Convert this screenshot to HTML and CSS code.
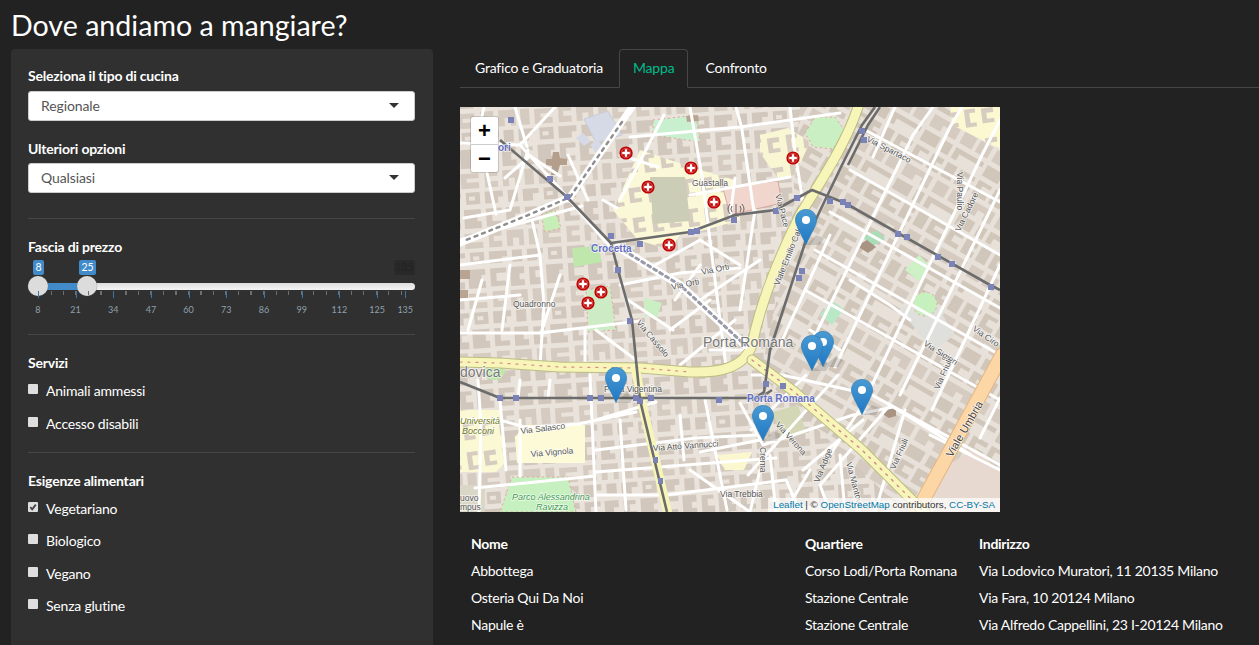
FILE: index.html
```html
<!DOCTYPE html>
<html lang="it">
<head>
    <meta charset="UTF-8">
    <meta name="viewport" content="width=device-width, initial-scale=1.0">
    <title>Dove andiamo a mangiare?</title>
    <link rel="stylesheet" href="styles.css">
</head>
<body>
    <h2 class="page-title">Dove andiamo a mangiare?</h2>

    <div class="layout">
        <aside class="well">
            <label class="field-label">Seleziona il tipo di cucina</label>
            <div class="select-box">Regionale</div>

            <label class="field-label second">Ulteriori opzioni</label>
            <div class="select-box">Qualsiasi</div>

            <hr>

            <label class="field-label">Fascia di prezzo</label>
            <div class="slider">
                <span class="bubble bubble-from">8</span>
                <span class="bubble bubble-to">25</span>
                <span class="bubble-max">135</span>
                <div class="track"><div class="track-bar"></div></div>
                <span class="handle handle-from"></span>
                <span class="handle handle-to"></span>
                <div class="minor-ticks"></div>
                <div class="scale">
                    <span class="tick">8</span>
                    <span class="tick">21</span>
                    <span class="tick">34</span>
                    <span class="tick">47</span>
                    <span class="tick">60</span>
                    <span class="tick">73</span>
                    <span class="tick">86</span>
                    <span class="tick">99</span>
                    <span class="tick">112</span>
                    <span class="tick">125</span>
                    <span class="tick tick-last">135</span>
                </div>
            </div>

            <hr class="after-slider">

            <label class="field-label">Servizi</label>
            <div class="check first"><span class="box"></span>Animali ammessi</div>
            <div class="check"><span class="box"></span>Accesso disabili</div>

            <hr class="after-checks">

            <label class="field-label">Esigenze alimentari</label>
            <div class="check first">
                <span class="box">
                    <svg viewBox="0 0 10 10" width="10" height="10"><path d="M2.3 5.2 4.2 7.4 7.8 2.6" fill="none" stroke="#444" stroke-width="1.8"/></svg>
                </span>Vegetariano
            </div>
            <div class="check"><span class="box"></span>Biologico</div>
            <div class="check"><span class="box"></span>Vegano</div>
            <div class="check"><span class="box"></span>Senza glutine</div>
        </aside>

        <main class="content">
            <ul class="tabs">
                <li class="tab">Grafico e Graduatoria</li>
                <li class="tab active">Mappa</li>
                <li class="tab">Confronto</li>
            </ul>

            <div class="map">
                <svg class="map-canvas" viewBox="460 107 540 405" width="540" height="405">
                    <defs>
                        <pattern id="blocksWest" width="78" height="60" patternUnits="userSpaceOnUse" patternTransform="rotate(-4)">
                            <rect width="78" height="60" fill="#e9e3db"/>
                            <path d="M2 2h16v5H8v8h9v5H2zM22 2h14v7h-5v6h5v6H22zM41 3h12v4h-6v7h7v7H41zM58 2h17v6h-4v6h4v7H58z" fill="#d2c7bc"/>
                            <path d="M3 25h13v5H8v5h8v6H3zM21 25h17v16H33v-8h-6v8h-6zM43 25h9v16h-9zM57 26h18v5H63v4h12v6H57z" fill="#d5cbc0"/>
                            <path d="M2 45h18v6h-5v6H2zM25 45h10v12H25zM40 45h16v5h-6v7H40zM61 45h14v12H61z" fill="#d2c7bc"/>
                            <path d="M64 49h6v4h-6z" fill="#e9e3db"/>
                        </pattern>
                        <pattern id="blocksEast" width="72" height="56" patternUnits="userSpaceOnUse" patternTransform="rotate(30)">
                            <rect width="72" height="56" fill="#e7e1da"/>
                            <path d="M2 2h15v4H8v7h9v5H2zM21 2h13v6h-6v4h6v6H21zM38 2h11v16H38zM53 2h17v5H59v5h11v6H53z" fill="#d1c6ba"/>
                            <path d="M3 23h30v13H24v-7h-8v7H3zM38 23h14v13H38zM56 23h14v13H56z" fill="#d5cbc0"/>
                            <path d="M2 41h18v12H2zM25 41h9v12H25zM38 41h32v5H44v7h-6z" fill="#d1c6ba"/>
                        </pattern>
                        <pattern id="blocksCampus" width="36" height="30" patternUnits="userSpaceOnUse" patternTransform="rotate(-8)">
                            <path d="M3 3h11v4H8v10h6v4H3zM20 4h12v5h-7v6h7v4H20z" fill="#d6ccc0"/>
                        </pattern>
                        <linearGradient id="pinFill" x1="0" y1="0" x2="0" y2="1">
                            <stop offset="0" stop-color="#4a9ad2"/>
                            <stop offset="1" stop-color="#1f78c4"/>
                        </linearGradient>
                        <symbol id="pin" viewBox="0 0 25 41">
                            <path d="M12.5.5C5.6.5.5 5.8.5 12.6.5 19 6.5 27 12.5 40.5 18.5 27 24.5 19 24.5 12.6 24.5 5.8 19.4.5 12.5.5z" fill="url(#pinFill)" stroke="#2e7fb8" stroke-width=".8"/>
                            <circle cx="12.5" cy="12.5" r="4.6" fill="#fff"/>
                        </symbol>
                        <symbol id="dot" viewBox="0 0 14 14">
                            <circle cx="7" cy="7" r="6.6" fill="#c00000"/>
                            <circle cx="7" cy="7" r="4.7" fill="none" stroke="#e9a0a0" stroke-width=".5"/>
                            <path d="M7 3.2v7.6M3.2 7h7.6" stroke="#fff" stroke-width="2.4"/>
                        </symbol>
                    </defs>

                    <g class="map-base">
                        <!-- ground -->
                        <rect x="460" y="107" width="540" height="405" fill="url(#blocksWest)"/>
                        <path d="M800 107H1000V512H905L760 375 790 240z" fill="url(#blocksEast)"/>

                        <!-- areas -->
                        <path d="M584 119l24-8 14 24-26 8z" fill="#d6d9e6" stroke="#c9cbd8"/>
                        <path d="M576 138l7-5 8 8-7 5zM590 145l8-5 6 8-8 5zM600 118l8-3 4 7-8 3z" fill="#d6d9e6"/>
                        <path d="M553 152l6 0 1 6 7 1 0 6-7 0-3 10-6 0 1-9-6-1 0-6 6 0z" fill="#b39f8b"/>
                        <path d="M640 150l60 20 35 10 5 40-35 10-25 5-10 15-32-10-25-30 18-40z" fill="#fbf8d8"/>
                        <path d="M640 150l60 20 35 10 5 40-35 10-25 5-10 15-32-10-25-30 18-40z" fill="url(#blocksCampus)"/>
                        <path d="M650 177h35l5 44-37 3z" fill="#cccdb6"/>
                        <path d="M653 120l43-5 4 27-34-5-13-2z" fill="#c8f0cf" stroke="#eb9f9f" stroke-dasharray="2 3"/>
                        <path d="M723 188l55-7 4 22-52 12z" fill="#f0d6cd" stroke="#d8a8a0"/>
                        <path d="M760 135l28-7 22 14-15 33-17 3-18-25z" fill="#f9f6d3"/>
                        <path d="M760 135l28-7 22 14-15 33-17 3-18-25z" fill="url(#blocksCampus)"/>
                        <path d="M815 117l20 0 10 14-12 18-20-2-8-14z" fill="#c9efc2" stroke="#eb9f9f" stroke-dasharray="2 3"/>
                        <path d="M950 107h50v42l-48-24z" fill="#fbf8d2"/>
                        <path d="M950 107h50v42l-48-24z" fill="url(#blocksCampus)"/>
                        <path d="M572 248l26-2 4 16-28 5z" fill="#bfe6ab"/>
                        <path d="M541 215l14-5 6 18-16 4z" fill="#c8eeb8" stroke="#eb9f9f" stroke-dasharray="2 3"/>
                        <path d="M586 290l24-4 6 44-28 2z" fill="#cdebc5" stroke="#eb9f9f" stroke-dasharray="2 3"/>
                        <path d="M644 298l18 5-5 14-12-1z" fill="#c9efc2"/>
                        <path d="M512 477h56l8 35h-76z" fill="#c6f0bf" stroke="#eb9f9f" stroke-dasharray="2 3"/>
                        <path d="M525 425h60v38h-68l-2-26z" fill="#fdfad8"/>
                        <path d="M460 410h40l8 50-12 12h-36z" fill="#fbf8d4"/>
                        <path d="M460 410h40l8 50-12 12h-36z" fill="url(#blocksCampus)"/>
                        <path d="M460 485h25v27h-25z" fill="#dad7c6"/>
                        <path d="M725 470l-8-15 35-3-8 18z" fill="#fbf7cf"/>
                        <path d="M773 412l25-7 8 28-25 8z" fill="#d3d7b5"/>
                        <path d="M900 310l30-15 25 40-22 15z" fill="#dfdfdb"/>
                        <path d="M925 292a12 12 0 1 0 .1 0z" fill="#c7f0bf" stroke="#eb9f9f" stroke-dasharray="2 3"/>
                        <path d="M820 315l12-14 12 8-12 16z" fill="#b8e8c6"/>
                        <path d="M905 270l14-15 12 12-12 14z" fill="#cdf1c5"/>
                        <path d="M925 480l50-32 25 24v40h-55z" fill="#e8d9d0"/>
                        <path d="M863 237l14-7 8 9-14 8z" fill="#a9ddb8"/>
                        <path d="M884 408l7-3 5 4 0 7-7 2-5-3z" fill="#a99483"/>
                        <path d="M857 246l10-6 9 7-8 6z" fill="#a99483"/>
                        <path d="M686 116l12-1 1 6-12 1zM460 270h10v9h-10zM460 290h8v8h-8z" fill="#b8a491"/>
                        <path d="M482 370q10-7 24 0q-4 11-12 10q-8 0-12-10z" fill="#bfe6ab"/>

                        <!-- streets -->
                        <g fill="none" stroke="#fff" stroke-width="3" stroke-linecap="round">
                            <path d="M460 143l60 2 40 44 50 58M520 145l35-38M528 150l-18 60-46 8"/>
                            <path d="M460 240l72-20 50-14M532 220l8 35 4 50-4 60M540 255l-80 10"/>
                            <path d="M505 178l25-22 30 20M515 107l12 40M484 107l-8 36M482 150l14 64"/>
                            <path d="M620 200l44-85M617 208l-14-8M630 137l110-10 100-14M588 200l-20-45M620 155l38 12"/>
                            <path d="M690 107l12 70 24 190M736 107l6 22M742 130l12 82M790 107l5 45 10 63"/>
                            <path d="M690 195l100-18M735 178l-5 40M755 210l-15 100M620 285l60-12 60-5"/>
                            <path d="M650 268l50-28 40 25M700 265l-25 35M700 300l60-40M628 300l45 30M670 330l40-30"/>
                            <path d="M460 333h80l100-12M482 280l-14 50M510 265l-8 65M560 275l-18 55M585 330v36M596 330l40 30M460 300l60-5"/>
                            <path d="M680 365l55-45M710 350h40"/>
                            <path d="M460 420h40l28 8 50-4 58-12M478 380l3 45-2 87M590 375l6 137M500 400l6 70M596 420l60-18M520 380l-2 18M550 380l-2 18"/>
                            <path d="M596 450l100-12 60-3M596 472l180-14M475 488l120-12M680 415l4 45M705 400l22 110M740 403l22 40M620 420l6 90M520 420v56"/>
                            <path d="M596 495h70l120-15 14 32M690 470l60 42M760 470l-10 42"/>
                            <path d="M752 375l30 0 90 20 128 70M760 440l-60 12M763 445l90-30 40-8 78 48"/>
                            <path d="M806 375l-55 55M838 375l-90 100M866 400l-36 55M890 405l-70 80 10 27M905 410l-30 102M863 420l-60 50"/>
                            <path d="M770 455l6 57M810 470l-25 42M840 455l5 57"/>
                            <path d="M865 130l135 72M850 170l150 85M830 212l170 96M815 250l185 105M805 290l195 110M1000 470l-70-35"/>
                            <path d="M808 350l105-215 20-28M835 367l115-240 12-20M872 385l110-230 18-35M900 395l100-205M932 410l68-145M980 438l20-40M780 345l50-110M895 107l-22 50"/>
                            <path d="M850 280l40 25 20 15M810 330l30 20"/>
                        </g>

                        <!-- coloured roads -->
                        <g fill="none" stroke-linecap="round" stroke-linejoin="round">
                            <path d="M1002 355L915 515" stroke="#e4b684" stroke-width="15"/>
                            <path d="M1002 355L915 515" stroke="#fcd6a4" stroke-width="13"/>
                            <path d="M858 107C846 145 815 190 800 215 775 265 760 305 752 345 744 368 720 373 690 372L640 368 560 367 500 363 460 362" stroke="#bdbd83" stroke-width="11"/>
                            <path d="M858 107C846 145 815 190 800 215 775 265 760 305 752 345 744 368 720 373 690 372L640 368 560 367 500 363 460 362" stroke="#f7f5b8" stroke-width="9"/>
                            <path d="M752 360l40 30 70 60 65 65" stroke="#bdbd83" stroke-width="11"/>
                            <path d="M752 360l40 30 70 60 65 65" stroke="#f7f5b8" stroke-width="9"/>
                            <path d="M752 360l40 30 70 60 65 65" stroke="#c88" stroke-width="1.4" stroke-dasharray="2 6"/>
                            <path d="M460 362l40 1 60 4 80 1 50 4" stroke="#d88" stroke-width="1.2" stroke-dasharray="2 6"/>
                            <path d="M636 372l8 40 24 102" stroke="#f7f5b8" stroke-width="9"/>
                            <path d="M632 107L570 197Q530 215 460 243" stroke="#fff" stroke-width="7"/>
                            <path d="M622 122L570 197Q530 215 466 240" stroke="#8d8d8d" stroke-width="2.4" stroke-dasharray="3 5"/>
                            <path d="M618 247l62 38 65 60" stroke="#fff" stroke-width="8"/>
                            <path d="M618 247l62 38 65 60" stroke="#999aa8" stroke-width="3" stroke-dasharray="3 4"/>
                        </g>

                        <!-- rail and metro lines -->
                        <g fill="none" stroke="#6c6c6c" stroke-width="2.6" stroke-linejoin="round">
                            <path d="M500 140L567 197 611 243 618 270 632 320 640 400 667 512"/>
                            <path d="M460 382L500 398H760L772 390"/>
                            <path d="M611 243L690 232 735 215 775 210 812 190 845 203 905 237 990 285 1000 290"/>
                            <path d="M875 107L862 125 842 165 806 240 770 350 764 392 752 400"/>
                            <path d="M880 107L868 125 848 165"/>
                        </g>
                        <g fill="#7a82b8">
                            <rect x="508" y="117" width="6" height="6"/><rect x="547" y="176" width="6" height="6"/>
                            <rect x="564" y="194" width="6" height="6"/><rect x="608" y="233" width="6" height="6"/>
                            <rect x="615" y="267" width="6" height="6"/><rect x="627" y="318" width="5" height="6"/>
                            <rect x="637" y="398" width="6" height="6"/><rect x="653" y="457" width="5" height="6"/>
                            <rect x="658" y="478" width="5" height="6"/><rect x="497" y="395" width="6" height="6"/>
                            <rect x="513" y="395" width="6" height="6"/><rect x="587" y="395" width="6" height="6"/>
                            <rect x="598" y="395" width="6" height="6"/><rect x="633" y="395" width="6" height="6"/>
                            <rect x="648" y="395" width="6" height="6"/><rect x="716" y="397" width="6" height="6"/>
                            <rect x="637" y="241" width="6" height="6"/><rect x="688" y="229" width="6" height="6"/>
                            <rect x="694" y="228" width="6" height="6"/><rect x="731" y="217" width="6" height="6"/>
                            <rect x="773" y="208" width="6" height="6"/><rect x="794" y="195" width="6" height="6"/>
                            <rect x="827" y="198" width="6" height="6"/><rect x="840" y="199" width="6" height="6"/>
                            <rect x="845" y="202" width="6" height="6"/><rect x="895" y="231" width="6" height="6"/>
                            <rect x="904" y="234" width="6" height="6"/><rect x="935" y="254" width="6" height="6"/>
                            <rect x="949" y="261" width="6" height="6"/><rect x="988" y="284" width="6" height="6"/>
                            <rect x="859" y="128" width="6" height="6"/><rect x="861" y="137" width="6" height="6"/>
                            <rect x="799" y="268" width="6" height="6"/><rect x="796" y="275" width="6" height="6"/>
                            <rect x="763" y="381" width="6" height="6"/><rect x="780" y="383" width="6" height="6"/>
                        </g>
                    </g>

                    <!-- labels -->
                    <g class="map-label">
                        <text x="591" y="252" class="metro">Crocetta</text>
                        <text x="498" y="151" class="metro">ori</text>
                        <text x="747" y="402" class="metro">Porta Romana</text>
                        <text x="692" y="186">Guastalla</text>
                        <text x="513" y="307">Quadronno</text>
                        <text x="703" y="347" class="large">Porta Romana</text>
                        <text x="460" y="377" class="large">dovica</text>
                        <text x="604" y="392">Porta Vigentina</text>
                        <text x="702" y="275" transform="rotate(-12 702 275)">Via Orti</text>
                        <text x="672" y="290" transform="rotate(-12 672 290)">Via Orti</text>
                        <text x="636" y="323" transform="rotate(50 636 323)">Via Cassolo</text>
                        <text x="521" y="434" transform="rotate(-7 521 434)">Via Salasco</text>
                        <text x="531" y="457" transform="rotate(-5 531 457)">Via Vignola</text>
                        <text x="653" y="451" transform="rotate(-4 653 451)">Via Atto Vannucci</text>
                        <text x="720" y="497">Via Trebbia</text>
                        <text x="460" y="424" class="park">Università</text>
                        <text x="462" y="434" class="park">Bocconi</text>
                        <text x="512" y="500" class="green">Parco Alessandrina</text>
                        <text x="536" y="510" class="green">Ravizza</text>
                        <text x="460" y="501">uovo</text>
                        <text x="460" y="510">mpus</text>
                        <text x="779" y="286" transform="rotate(-68 779 286)">Viale Emilio Caldara</text>
                        <text x="952" y="458" class="large-road" transform="rotate(-60 952 458)">Viale Umbria</text>
                        <text x="866" y="141" transform="rotate(27 866 141)">Via Spartaco</text>
                        <text x="960" y="232" transform="rotate(-64 960 232)">Via Cadore</text>
                        <text x="957" y="172" transform="rotate(90 957 172)">Via Paulio</text>
                        <text x="923" y="345" transform="rotate(32 923 345)">Via Sigieri</text>
                        <text x="939" y="390" transform="rotate(-66 939 390)">Via Friuli</text>
                        <text x="895" y="470" transform="rotate(-66 895 470)">Via Friuli</text>
                        <text x="775" y="425" transform="rotate(48 775 425)">Via Verona</text>
                        <text x="760" y="447" transform="rotate(90 760 447)">Crema</text>
                        <text x="819" y="483" transform="rotate(-68 819 483)">Via Adige</text>
                        <text x="846" y="463" transform="rotate(75 846 463)">Via Mantova</text>
                        <text x="972" y="330" transform="rotate(35 972 330)">Via Ciro</text>
                        <text x="775" y="195" transform="rotate(75 775 195)">Via Pace</text>
                    </g>

                    <!-- antenna -->
                    <g fill="none" stroke="#666" stroke-width="1">
                        <path d="M736 204v12M733 216h6M732 206a5 5 0 0 0 0 6M740 206a5 5 0 0 1 0 6M730 204a8 8 0 0 0 0 10M742 204a8 8 0 0 1 0 10"/>
                    </g>

                    <!-- restaurants -->
                    <use href="#dot" x="619" y="146" width="14" height="14"/>
                    <use href="#dot" x="684" y="161" width="14" height="14"/>
                    <use href="#dot" x="641" y="180" width="14" height="14"/>
                    <use href="#dot" x="707" y="195" width="14" height="14"/>
                    <use href="#dot" x="662" y="238" width="14" height="14"/>
                    <use href="#dot" x="786" y="151" width="14" height="14"/>
                    <use href="#dot" x="576" y="277" width="14" height="14"/>
                    <use href="#dot" x="594" y="285" width="14" height="14"/>
                    <use href="#dot" x="581" y="296" width="14" height="14"/>

                    <!-- marker shadows -->
                    <g fill="#000" opacity=".13">
                        <path d="M806 245l10-10 8 3-4 7z"/>
                        <path d="M616 403l10-10 8 3-4 7z"/>
                        <path d="M823 367l12-10 8 3-5 7z"/>
                        <path d="M812 371l10-10 8 3-4 7z"/>
                        <path d="M862 415l10-10 8 3-4 7z"/>
                        <path d="M763 441l10-10 8 3-4 7z"/>
                    </g>

                    <!-- selected places -->
                    <use href="#pin" x="795" y="209" width="22" height="36"/>
                    <use href="#pin" x="605" y="367" width="22" height="36"/>
                    <use href="#pin" x="812" y="331" width="22" height="36"/>
                    <use href="#pin" x="801" y="335" width="22" height="36"/>
                    <use href="#pin" x="851" y="379" width="22" height="36"/>
                    <use href="#pin" x="752" y="405" width="22" height="36"/>
                </svg>

                <div class="zoom-control">
                    <span class="zoom-btn zoom-in">+</span>
                    <span class="zoom-btn">&minus;</span>
                </div>
                <div class="attribution"><a>Leaflet</a> | &copy; <a>OpenStreetMap</a> contributors, <a>CC-BY-SA</a></div>
            </div>

            <table class="results">
                <thead>
                    <tr><th>Nome</th><th>Quartiere</th><th>Indirizzo</th></tr>
                </thead>
                <tbody>
                    <tr><td>Abbottega</td><td>Corso Lodi/Porta Romana</td><td>Via Lodovico Muratori, 11 20135 Milano</td></tr>
                    <tr><td>Osteria Qui Da Noi</td><td>Stazione Centrale</td><td>Via Fara, 10 20124 Milano</td></tr>
                    <tr><td>Napule è</td><td>Stazione Centrale</td><td>Via Alfredo Cappellini, 23 I-20124 Milano</td></tr>
                </tbody>
            </table>
        </main>
    </div>
</body>
</html>
```

FILE: styles.css
```css
:root {
    --page-color: #222222;
    --well-color: #303030;
    --line-color: #464646;
    --slider-blue: #428bca;
    --accent-color: #00bc8c;
}
html, body {
    height: 100%;
}
body {
    margin: 0;
    overflow: hidden;
    background-color: var(--page-color);
    color: #fff;
    font-family: 'Lato', sans-serif;
    font-size: 14px;
    line-height: 21px;
    letter-spacing: -0.2px;
}
.page-title {
    margin: 0;
    padding: 7px 11px 0;
    height: 49px;
    box-sizing: border-box;
    font-size: 28.6px;
    line-height: 36px;
    font-weight: 400;
    letter-spacing: 0;
}
.layout {
    display: flex;
    align-items: flex-start;
    padding-left: 11px;
}
.well {
    box-sizing: border-box;
    flex: 0 0 422px;
    height: 600px;
    padding: 16px 18px 0 17px;
    background-color: var(--well-color);
    border-radius: 4px;
}
.field-label {
    display: block;
    font-weight: 700;
    margin-bottom: 5px;
}
.field-label.second {
    margin-top: 17px;
    margin-bottom: 4px;
}
.select-box {
    position: relative;
    box-sizing: border-box;
    height: 30px;
    padding: 3px 12px;
    background-color: #fff;
    border: 1px solid #ccc;
    border-radius: 3px;
    color: #555;
    letter-spacing: -0.1px;
}
.select-box::after {
    content: '';
    position: absolute;
    right: 15px;
    top: 11px;
    border-left: 5px solid transparent;
    border-right: 5px solid transparent;
    border-top: 5px solid #333;
}
hr {
    border: 0;
    border-top: 1px solid var(--line-color);
    margin: 25px 0 17px;
}
hr.after-slider {
    margin: 16px 0 17px;
}
hr.after-checks {
    margin: 18px 0 17.4px;
}
.slider {
    position: relative;
    height: 58px;
    margin-top: -2px;
}
.bubble, .bubble-max {
    position: absolute;
    top: 0;
    height: 15px;
    line-height: 15px;
    font-size: 10.5px;
    letter-spacing: 0;
    text-align: center;
    border-radius: 2px;
}
.bubble {
    background-color: var(--slider-blue);
    color: #fff;
}
.bubble-from {
    left: 5px;
    width: 11px;
}
.bubble-to {
    left: 51px;
    width: 17px;
}
.bubble-max {
    right: 0;
    width: 21px;
    background-color: #292929;
    color: #222;
}
.track {
    position: absolute;
    left: 0;
    right: 0;
    top: 23px;
    height: 7px;
    background: linear-gradient(#dddddd, #f5f5f5);
    border-radius: 4px;
}
.track-bar {
    position: absolute;
    left: 10px;
    top: 0;
    width: 49px;
    height: 7px;
    background-color: var(--slider-blue);
}
.handle {
    position: absolute;
    top: 16px;
    width: 20px;
    height: 20px;
    background-color: #dcdcdc;
    border-radius: 50%;
    box-shadow: 0 0 1px #666;
}
.handle-from {
    left: 0;
}
.handle-to {
    left: 49px;
}
.minor-ticks {
    position: absolute;
    left: 10px;
    right: 10px;
    top: 31px;
    height: 4px;
    background: repeating-linear-gradient(90deg, #6f6f6f 0, #6f6f6f 1px, transparent 1px, transparent 12.5px);
}
.scale {
    position: absolute;
    left: -9px;
    top: 31px;
    display: flex;
    height: 25px;
}
.tick {
    position: relative;
    flex: 0 0 37.7px;
    padding-top: 14px;
    color: #8ea0ae;
    font-size: 9px;
    line-height: 10px;
    letter-spacing: 0;
    text-align: center;
}
.tick::before {
    content: '';
    position: absolute;
    left: 50%;
    top: 0;
    width: 1px;
    height: 7px;
    background-color: #3f74a3;
}
.tick-last {
    margin-left: -9.5px;
}
.check {
    display: flex;
    align-items: center;
    margin-top: 11.5px;
}
.check.first {
    margin-top: 7px;
}
.box {
    flex: 0 0 10px;
    width: 10px;
    height: 10px;
    margin: -3px 8px 0 0;
    background-color: #dedede;
    border-radius: 1px;
    line-height: 0;
}
.content {
    flex: 1;
    min-width: 0;
    padding-left: 27px;
}
.tabs {
    display: flex;
    list-style: none;
    margin: 0;
    padding: 0;
    height: 38px;
    border-bottom: 1px solid var(--line-color);
}
.tab {
    height: 39px;
    box-sizing: border-box;
    padding: 7px 14px;
    margin-right: 1px;
    border: 1px solid transparent;
    border-radius: 4px 4px 0 0;
    white-space: nowrap;
}
.tab.active {
    padding: 7px 13px;
    margin-right: 2px;
    color: var(--accent-color);
    background-color: var(--page-color);
    border-color: var(--line-color) var(--line-color) var(--page-color);
}
.map {
    position: relative;
    width: 540px;
    height: 405px;
    margin-top: 19px;
    background-color: #ddd;
}
.map-canvas {
    display: block;
}
.map-base {
    filter: blur(0.5px);
}
.map-label text {
    font-family: 'Liberation Sans', sans-serif;
    font-size: 8.5px;
    letter-spacing: 0;
    fill: #555;
    stroke: #fff;
    stroke-width: 1.6px;
    stroke-opacity: .7;
    paint-order: stroke;
}
.map-label .metro {
    fill: #6470c4;
    font-size: 10px;
    font-weight: 700;
}
.map-label .large {
    fill: #777;
    font-size: 14px;
}
.map-label .large-road {
    font-size: 11px;
    fill: #444;
}
.map-label .park {
    fill: #6f7a20;
    font-style: italic;
    font-size: 9px;
}
.map-label .green {
    fill: #3d9a50;
    font-style: italic;
    font-size: 9px;
}
.zoom-control {
    position: absolute;
    left: 11px;
    top: 10px;
    display: flex;
    flex-direction: column;
    width: 27px;
    background-color: #fff;
    border-radius: 2px;
    box-shadow: 0 0 0 1px rgba(0,0,0,0.15);
}
.zoom-btn {
    height: 27px;
    color: #000;
    font-family: 'Liberation Sans', sans-serif;
    font-size: 22px;
    font-weight: 700;
    line-height: 27px;
    letter-spacing: 0;
    text-align: center;
}
.zoom-in {
    border-bottom: 1px solid #ccc;
}
.attribution {
    position: absolute;
    right: 0;
    bottom: 0;
    padding: 0 5px;
    background-color: rgba(255,255,255,0.7);
    color: #333;
    font-family: 'Liberation Sans', sans-serif;
    font-size: 9.8px;
    line-height: 14px;
    letter-spacing: 0;
}
.attribution a {
    color: #0078a8;
}
.results {
    border-collapse: collapse;
    margin-top: 18px;
    letter-spacing: -0.27px;
}
.results th, .results td {
    height: 27px;
    padding: 0 11px;
    text-align: left;
    white-space: nowrap;
}
.results th:first-child {
    width: 312px;
}
.results th:nth-child(2) {
    width: 152px;
}
```
